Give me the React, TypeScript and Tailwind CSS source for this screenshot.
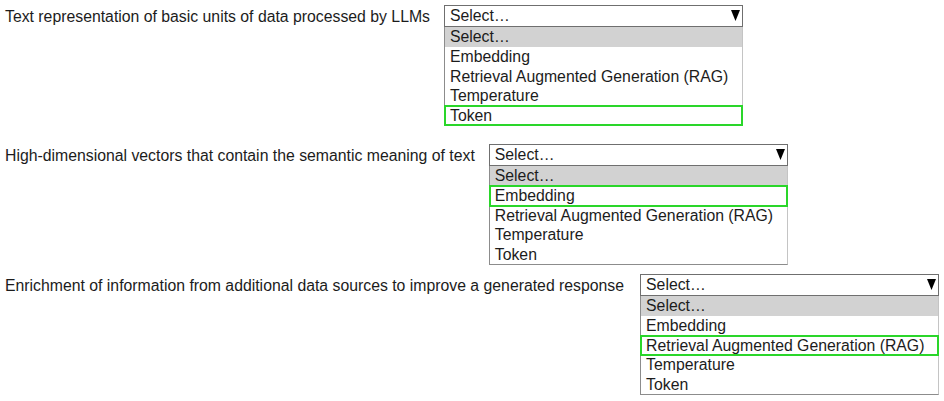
const OPTIONS = [
  "Embedding",
  "Retrieval Augmented Generation (RAG)",
  "Temperature",
  "Token",
]

const ROWS = [
  {
    label: "Text representation of basic units of data processed by LLMs",
    answer: "Token",
    cls: "mt-[5px] gap-[14px]",
  },
  {
    label: "High-dimensional vectors that contain the semantic meaning of text",
    answer: "Embedding",
    cls: "mt-[18px] gap-[14px]",
  },
  {
    label: "Enrichment of information from additional data sources to improve a generated response",
    answer: "Retrieval Augmented Generation (RAG)",
    cls: "mt-[9px] gap-[16px]",
  },
]

function Dropdown({ answer }: { answer: string }) {
  return (
    <div className="w-[299px] shrink-0">
      <div className="flex h-[22px] items-center justify-between border border-[#6f6f6f] bg-white pl-[5px] pr-[2px]">
        <span>Select…</span>
        <svg width="9" height="11" viewBox="0 0 9 11" className="mb-[1px]">
          <polygon points="0,0 9,0 4.5,11" fill="#000" />
        </svg>
      </div>
      <div className="border border-t-0 border-[#8c8c8c] border-r-[#c4c4c4] bg-white">
        <div className="h-[20px] bg-[#d2d2d2] pl-[5px] leading-[20px]">Select…</div>
        {OPTIONS.map((o) => (
          <div
            key={o}
            className={
              "h-[19.5px] pl-[5px] leading-[19.5px] " +
              (o === answer ? "outline-2 -outline-offset-1 outline-[#2ad62a]" : "")
            }
          >
            {o}
          </div>
        ))}
      </div>
    </div>
  )
}

export default function App() {
  return (
    <div
      className="min-h-[401px] w-[944px] bg-white text-[15.8px] text-[#1c1c1c]"
      style={{ fontFamily: '"Liberation Sans", Arial, sans-serif' }}
    >
      <div className="flex flex-col pl-[5px]">
        {ROWS.map((r) => (
          <div key={r.label} className={"flex items-start " + r.cls}>
            <div className="h-[22px] shrink-0 leading-[23px]">{r.label}</div>
            <Dropdown answer={r.answer} />
          </div>
        ))}
      </div>
    </div>
  )
}
